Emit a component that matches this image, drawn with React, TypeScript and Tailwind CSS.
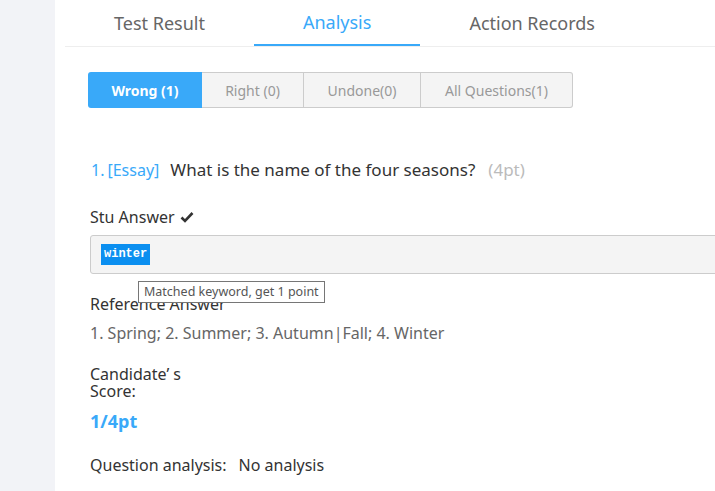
import React from "react";

const tabs = ["Test Result", "Analysis", "Action Records"];
const filters = [
    { label: "Wrong (1)", w: "w-[114px]" },
    { label: "Right (0)", w: "w-[102px]" },
    { label: "Undone(0)", w: "w-[117px]" },
    { label: "All Questions(1)", w: "w-[152px]" },
];

const App = () => {
    return (
        <div className="flex h-[491px] w-[715px] overflow-hidden bg-white font-['Noto_Sans',sans-serif] text-[#333]">
            <div className="w-[55px] shrink-0 bg-[#f2f3f7]" />
            <div className="flex-1 pl-[10px]">
                <div className="flex h-[47px] border-b border-[#eee]">
                    {tabs.map((t, i) => (
                        <div
                            key={t}
                            className={
                                i === 1
                                    ? "flex items-center border-b-2 border-[#39a9f9] px-[49px] text-[18px] text-[#39a9f9]"
                                    : "flex items-center px-[49px] text-[18px] text-[#666]"
                            }
                        >
                            {t}
                        </div>
                    ))}
                </div>

                <div className="pl-[23px]">
                    <div className="mt-[25px] flex h-[36px]">
                        {filters.map((f, i) => (
                            <div
                                key={f.label}
                                className={
                                    i === 0
                                        ? `${f.w} flex items-center justify-center rounded-l-[3px] bg-[#39a9f9] text-[14px] font-bold text-white`
                                        : i === filters.length - 1
                                          ? `${f.w} flex items-center justify-center rounded-r-[3px] border border-l-0 border-[#ccc] bg-[#f4f4f4] text-[14px] text-[#999]`
                                          : `${f.w} flex items-center justify-center border border-l-0 border-[#ccc] bg-[#f4f4f4] text-[14px] text-[#999]`
                                }
                            >
                                {f.label}
                            </div>
                        ))}
                    </div>

                    <div className="mt-[49px] flex items-center pl-[3px] text-[17px]">
                        <span className="text-[16px] text-[#39a9f9]">1.</span>
                        <span className="ml-[3px] text-[16px] text-[#39a9f9]">[Essay]</span>
                        <span className="ml-[11px] text-[#333]">What is the name of the four seasons?</span>
                        <span className="ml-[13px] text-[#bbb]">(4pt)</span>
                    </div>

                    <div className="mt-[22px] flex items-center gap-[5px] pl-[2px] text-[16px] text-[#333]">
                        Stu Answer
                        <svg width="14" height="12" viewBox="0 0 14 12">
                            <path d="M1.5 6.5 L5 10 L12.5 2" fill="none" stroke="#333" strokeWidth="2.6" />
                        </svg>
                    </div>

                    <div className="relative mt-[6px] ml-[2px] h-[39px] w-[700px] rounded-[3px] border border-[#ccc] bg-[#f4f4f4]">
                        <span className="absolute left-[10px] top-[8px] bg-[#0b8ff0] px-[3px] py-[2px] font-['Liberation_Mono',monospace] text-[12px] font-bold leading-[17px] text-white">
                            winter
                        </span>
                        <div className="absolute left-[47px] top-[45px] z-10 border border-[#767676] bg-white px-[5px] py-[1px] text-[12.5px] leading-[18px] text-[#555] whitespace-nowrap">
                            Matched keyword, get 1 point
                        </div>
                    </div>

                    <div className="pl-[2px] text-[16px]">
                        <div className="mt-[19px] leading-[22px] text-[#333]">Reference Answer</div>
                        <div className="mt-[7px] leading-[22px] text-[#666]">
                            1. Spring; 2. Summer; 3. Autumn|Fall; 4. Winter
                        </div>
                        <div className="mt-[22px] w-[110px] leading-[17px] text-[#333]">
                            Candidate’ s Score:
                        </div>
                        <div className="mt-[10px] text-[18px] font-bold leading-[22px] text-[#39a9f9]">1/4pt</div>
                        <div className="mt-[22px] leading-[22px] text-[#333]">
                            Question analysis:<span className="ml-[12px]">No analysis</span>
                        </div>
                    </div>
                </div>
            </div>
        </div>
    );
};

export default App;
